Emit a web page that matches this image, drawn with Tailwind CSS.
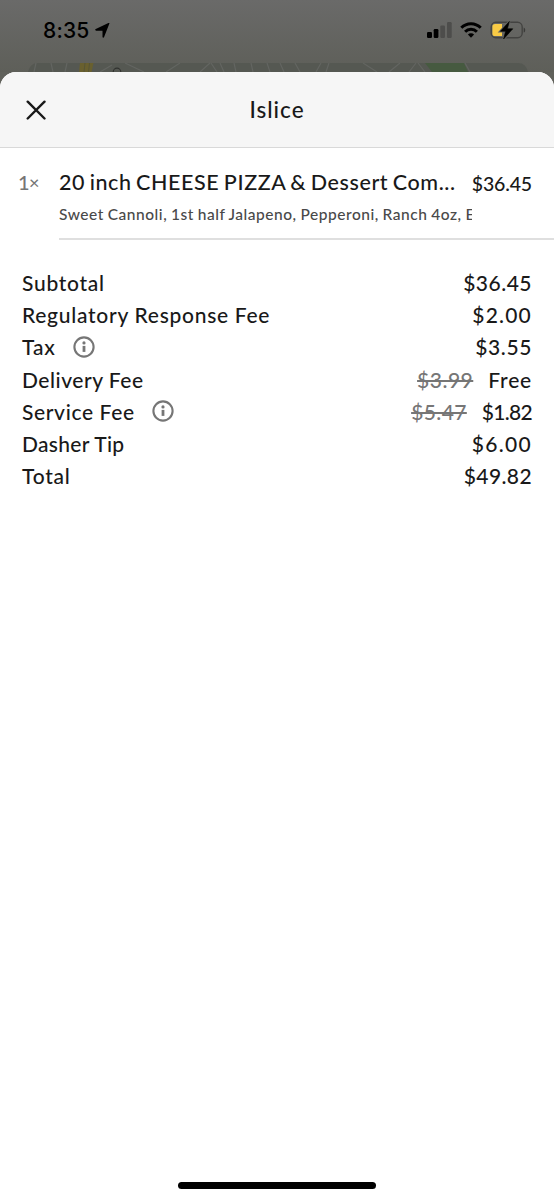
<!DOCTYPE html>
<html lang="en">
<head>
<meta charset="utf-8">
<title>Islice</title>
<script src="https://cdn.jsdelivr.net/npm/@tailwindcss/browser@4"></script>
</head>
<body class="h-[1200px] w-[554px] overflow-hidden bg-[#63645f] font-['Lato',sans-serif] font-medium text-[#191919]">
<div class="flex h-full flex-col">
  <!-- status bar and dimmed map -->
  <header class="relative h-[72px] shrink-0 bg-linear-to-b from-[#6a6a69] to-[#5e5f59]">
    <div class="flex h-[60px] items-center justify-between pr-[28px] pl-[43px] text-black">
      <div class="flex items-center gap-[5px]">
        <span class="font-['Inter',sans-serif] text-[21px] leading-none font-medium tracking-[0.200px]">8:35</span>
        <svg class="h-[15px] w-[15px]" viewBox="0 0 15 15"><path d="M14.400.5 9 14.300c-.3.7-1.500.6-1.500-.3V7.700H1.100C.1 7.700-.2 6.400.8 6L13.400.1c.7-.3 1.200-.1 1 .4Z"/></svg>
      </div>
      <div class="flex items-center">
        <svg class="h-[16px] w-[25px]" viewBox="0 0 25 16"><rect x="0" y="10" width="5" height="6" rx="1.2"/><rect x="6.700" y="7" width="4.700" height="9" rx="1.2"/><rect x="13.300" y="3.500" width="4.700" height="12.500" rx="1.2" fill="#4d4d4b"/><rect x="20" y="0" width="4.700" height="16" rx="1.2" fill="#4d4d4b"/></svg>
        <svg class="ml-[8px] h-[16px] w-[22px]" viewBox="0 0 22 16"><g fill="none" stroke="#000" stroke-width="3"><path d="M1.300 5.700a13.600 13.600 0 0 1 19.400 0"/><path d="M5.100 9.700a8.300 8.300 0 0 1 11.800 0"/></g><path d="M7.900 12.500a4.400 4.400 0 0 1 6.200 0L11 15.700Z"/></svg>
        <svg class="ml-[8px] h-[20px] w-[36px]" viewBox="0 0 36 20"><rect x="1.200" y="2.300" width="31" height="15.400" rx="4.600" fill="none" stroke="#434341" stroke-width="1.400"/><path d="M33.700 7.400c2 .7 2 4.500 0 5.200Z" fill="#3a3a38"/><path d="M5 4h7v12H5a2.600 2.600 0 0 1-2.600-2.600V6.600A2.600 2.600 0 0 1 5 4Z" fill="#f9cb45"/><path d="M19.300 1.500 10.400 11.300h5.200l-2 7.700 9.200-10.200h-5.400Z" stroke="#656661" stroke-width="2.400"/><path d="M19.300 1.500 10.400 11.300h5.200l-2 7.700 9.200-10.200h-5.400Z" stroke="#000" stroke-width=".6" stroke-linejoin="round"/></svg>
      </div>
    </div>
    <svg class="block h-[12px] w-full" viewBox="0 0 554 12"><path d="M28 12q2-9 10-9h480q8 0 10 9Z" fill="#555852"/><path d="M80 3h13.500l-2 9H79Z" fill="#69602f"/><path d="M85 3l-1 9M89.500 3l-1 9" stroke="#575536"/><path d="M425 3h39l4 9h-36Z" fill="#465a40"/><g fill="none" stroke="#636561" stroke-width="1.200"><path d="M36 3l-2 9M51 3l2 9M67 3l-2 9M112 5l-12 7M125 3l19 9M180 3l-14 9M210 3l-10 9M211 3l6 9M220 3l4 9M234 3l2 9M251 3l2 9M267 3l3 9M280 3l4 9M295 3l5 9M321 3l-5 9M329 3l-3 9M363 3l14 9M400 3l-11 9M416 3l-7 9M418 3l7 9M465 3l5 9"/></g><circle cx="117" cy="12" r="3.800" fill="none" stroke="#31322f" stroke-width="1.200"/></svg>
    <div class="absolute top-[72px] left-0 h-5 w-full bg-[#60615b]"></div>
  </header>

  <main class="relative flex min-h-0 grow flex-col overflow-hidden rounded-t-[16px] bg-white">
    <div class="grid h-[76px] shrink-0 grid-cols-[1fr_auto_1fr] items-center border-b border-[#d9d9d9] bg-[#f6f6f6]">
      <svg class="ml-[26px] h-[20px] w-[20px]" viewBox="0 0 20 20" fill="none" stroke="#191919" stroke-width="2.400" stroke-linecap="round"><path d="M1.700 1.700 18.500 18.500M18.500 1.700 1.700 18.500"/></svg>
      <h1 class="mt-px text-[22.500px] leading-[30px] tracking-[1px]">Islice</h1>
    </div>

    <section class="flex h-[92px] shrink-0 pl-[18px]">
      <div class="flex w-[41px] shrink-0 gap-[2px] pt-[18px] text-[20px] leading-[32px] text-[#767676]"><span class="w-[9px]">1</span><span class="text-[18px]">×</span></div>
      <div class="min-w-0 grow border-b-2 border-[#dfdfdf]">
        <div class="flex h-[50px] justify-between pt-[18px] pr-[22px] whitespace-nowrap">
          <h2 class="text-[21.500px] leading-[32px] tracking-[0.590px] [word-spacing:-1.500px]">20 inch CHEESE PIZZA &amp; Dessert Com...</h2>
          <span class="pt-[2px] text-[19.500px] leading-[32px] tracking-[-0.150px]">$36.45</span>
        </div>
        <p class="w-[413px] overflow-hidden text-[15.500px] leading-[32px] tracking-[0.530px] whitespace-nowrap text-[#494949] [word-spacing:-0.650px]">Sweet Cannoli, 1st half Jalapeno, Pepperoni, Ranch 4oz, E</p>
      </div>
    </section>

    <dl class="mt-[27px] px-[22px] text-[21px] leading-[32.200px] whitespace-nowrap">
      <div class="flex justify-between"><dt class="tracking-[0.720px]">Subtotal</dt><dd class="tracking-[0.500px]">$36.45</dd></div>
      <div class="flex justify-between"><dt class="tracking-[0.720px]">Regulatory Response Fee</dt><dd class="tracking-[1.200px]">$2.00</dd></div>
      <div class="flex justify-between">
        <dt class="flex items-center gap-[17px] tracking-[0.800px]">Tax
          <svg class="-mt-px h-[22px] w-[22px]" viewBox="0 0 22 22"><circle cx="11" cy="11" r="9.600" fill="none" stroke="#767676" stroke-width="2.100"/><circle cx="11" cy="6.900" r="1.600" fill="#767676"/><path d="M9.600 9.900h2.800v6H9.600Z" fill="#767676"/></svg></dt>
        <dd class="tracking-[0.600px]">$3.55</dd></div>
      <div class="flex justify-between"><dt class="tracking-[0.520px]">Delivery Fee</dt><dd class="flex gap-[15px]"><s class="tracking-[0.500px] text-[#767676] decoration-[1.500px]">$3.99</s><span class="tracking-[0.800px]">Free</span></dd></div>
      <div class="flex justify-between">
        <dt class="flex items-center gap-[17px] tracking-[0.640px]">Service Fee
          <svg class="-mt-px h-[22px] w-[22px]" viewBox="0 0 22 22"><circle cx="11" cy="11" r="9.600" fill="none" stroke="#767676" stroke-width="2.100"/><circle cx="11" cy="6.900" r="1.600" fill="#767676"/><path d="M9.600 9.900h2.800v6H9.600Z" fill="#767676"/></svg></dt>
        <dd class="flex gap-[15px]"><s class="tracking-[0.400px] text-[#767676] decoration-[1.500px]">$5.47</s><span class="tracking-[-0.700px]">$1.82</span></dd></div>
      <div class="flex justify-between"><dt class="tracking-[0.300px]">Dasher Tip</dt><dd class="tracking-[1.300px]">$6.00</dd></div>
      <div class="flex justify-between"><dt class="tracking-[0.750px]">Total</dt><dd class="tracking-[0.400px]">$49.82</dd></div>
    </dl>

    <div class="mx-auto mt-auto mb-[11px] h-[7px] w-[198px] rounded-full bg-black"></div>
  </main>
</div>
</body>
</html>
